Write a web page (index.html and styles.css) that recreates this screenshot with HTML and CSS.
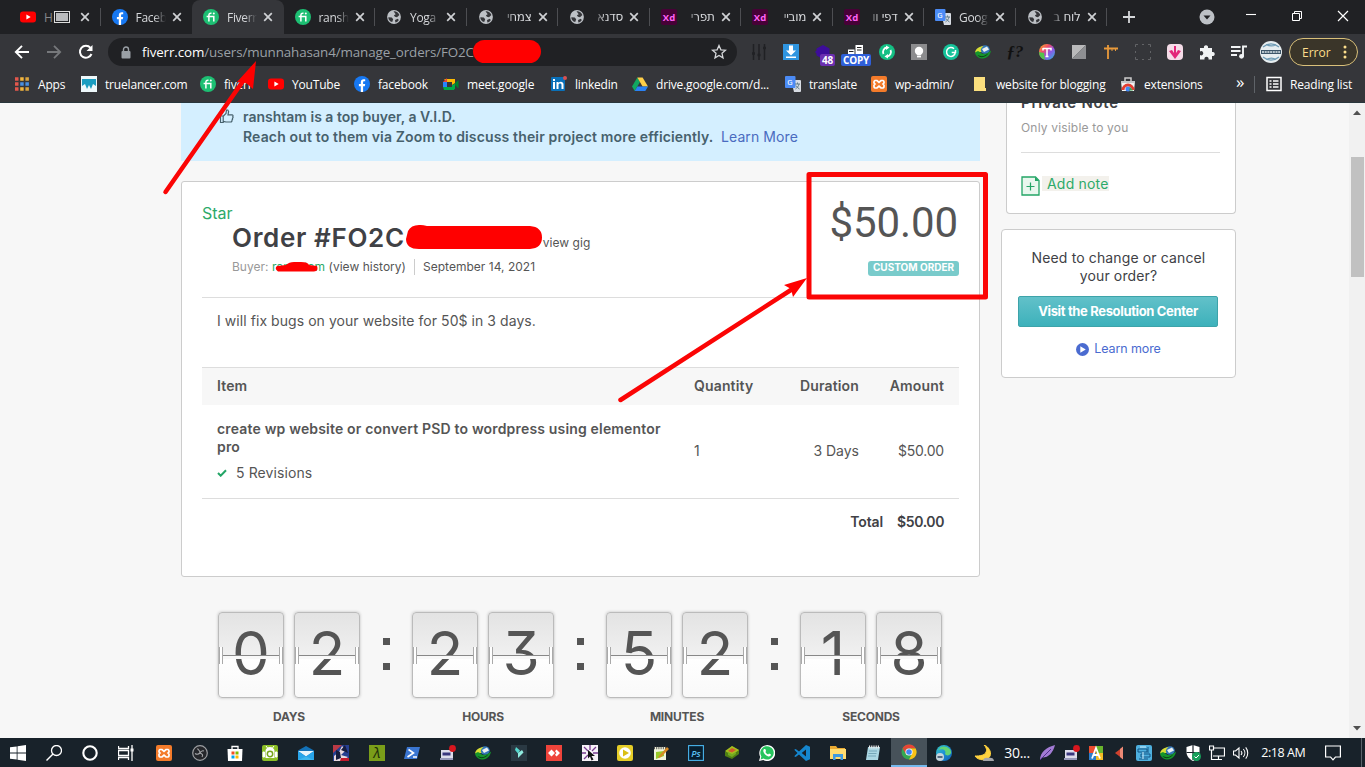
FILE: index.html
```html
<!DOCTYPE html>
<html lang="en">
<head>
<meta charset="utf-8">
<title>Fiverr order</title>
<link rel="stylesheet" href="styles.css">
</head>
<body>
<svg class="sprite" aria-hidden="true">
  <defs>
    <linearGradient id="rain" x2="1" y2="1"><stop offset="0" stop-color="#f9c21b"/><stop offset=".35" stop-color="#f04b6b"/><stop offset=".6" stop-color="#8f55e8"/><stop offset="1" stop-color="#21c3d6"/></linearGradient>
    <linearGradient id="edgeg" x2="1" y2="1"><stop offset="0" stop-color="#36c9c0"/><stop offset=".5" stop-color="#1c8fd8"/><stop offset="1" stop-color="#0f5cab"/></linearGradient>
  </defs>
  <symbol id="x" viewBox="0 0 10 10"><path d="M1.200 1.200l7.600 7.600M8.800 1.200l-7.600 7.600" stroke="currentColor" stroke-width="1.700"/></symbol>
  <symbol id="yt" viewBox="0 0 16 16"><rect y="2.500" width="16" height="11" rx="3" fill="#f00"/><path d="M6.400 5.500v5l4.300-2.500z" fill="#fff"/></symbol>
  <symbol id="fb" viewBox="0 0 16 16"><circle cx="8" cy="8" r="8" fill="#1778f2"/><path d="M6.800 16v-5.700H4.900V8h1.900V6.300c0-2 1.100-3 2.900-3 .8 0 1.500.1 1.500.1v1.900h-1c-.9 0-1.100.5-1.100 1.100V8h2.100l-.4 2.300H9.100V16z" fill="#fff"/></symbol>
  <symbol id="fi" viewBox="0 0 16 16"><circle cx="8" cy="8" r="8" fill="#1dbf73"/><path d="M3.600 7.400h7.200v5M5.900 12.400V6.200c0-1.400.8-2.100 2.600-1.900" fill="none" stroke="#fff" stroke-width="1.500"/><circle cx="10.800" cy="4.600" r="1" fill="#fff"/></symbol>
  <symbol id="globe" viewBox="0 0 16 16"><circle cx="8" cy="8" r="6.900" fill="#bdc1c6"/><path d="M7.500 2.300c2.500-.4 5 1.400 5.900 3.700L11 8.200l-2.100-.4-1-1.500 1.800-1zM2.300 8.200l3.500.3 1.400 1.800-1 2.800C3.700 12.500 2.300 10.500 2.300 8.200zM9 11l2.800-1.200 1 1.200c-.8 1.400-2 2.200-3.400 2.600z" fill="#35363a"/></symbol>
  <symbol id="xd" viewBox="0 0 16 16"><rect width="16" height="16" rx="2" fill="#470137"/><text x="8" y="11.600" text-anchor="middle" font-family="Open Sans" font-size="9.500" font-weight="700" fill="#ff61f6">Xd</text></symbol>
  <symbol id="gt" viewBox="0 0 16 16"><path d="M6 4h9a1 1 0 0 1 1 1v10a1 1 0 0 1-1 1H9z" fill="#d8dce3"/><rect width="10.500" height="12" rx="1" fill="#4b8bf5"/><text x="5" y="9" text-anchor="middle" font-family="Roboto" font-size="8" fill="#fff">G</text><path d="M10 8h5M12.500 6.500V8M14 8c-.5 2.500-2 4-3.500 5M11 9.500c.8 1.500 2 2.500 3.500 3.500" stroke="#607d8b" fill="none"/></symbol>
  <symbol id="xampp" viewBox="0 0 16 16"><rect width="16" height="16" rx="2" fill="#f47b2a"/><path d="M5.500 4.500H4a1.500 1.500 0 0 0-1 1.500v1L4 8l-1 1v1.500A1.500 1.500 0 0 0 4 12h2l2-1.800L10 12h2a1.500 1.500 0 0 0 1-1.500V9l-1-1 1-1V6a1.500 1.500 0 0 0-1-1.500h-2L8 6.300 6 4.500z" fill="none" stroke="#fff" stroke-width="1.700"/></symbol>
  <symbol id="idm" viewBox="0 0 16 16"><ellipse cx="10" cy="5.500" rx="4.800" ry="4.300" fill="#3477b8"/><path d="M0 8.500c1-4 4-6 8.500-6.500-2.500 2-3.500 4-2 6z" fill="#d8df35"/><path d="M0 9c2-2.500 4-2 6 0 3 2 6 1 10-2.500-.5 4.500-4 7.500-8 8C4 14.500 1 12.500 0 9z" fill="#15952c"/><path d="M2.500 11c4 2.200 8 1 11-2-2 4-8 6-11 2z" fill="#0a3d16"/><path d="M7 5l5-2.500 2 3-5 2.500z" fill="#e9f0f2"/></symbol>
  <symbol id="pc" viewBox="0 0 16 16"><path d="M1 5h12v9H1z" fill="#deddec"/><path d="M2.500 7.500h8v3h-8z" fill="#3a377f"/><path d="M0 13h13v2H0z" fill="#9798ba"/><circle cx="12.500" cy="3.500" r="3.400" fill="#d8161e"/></symbol>
</svg>

<header class="tabs">
  <div class="tab"><svg class="fav"><use href="#yt"/></svg><span class="tt">H<i class="tofu"></i></span><svg class="cx"><use href="#x"/></svg></div>
  <div class="tab nosep"><svg class="fav"><use href="#fb"/></svg><span class="tt">Faceb</span><svg class="cx"><use href="#x"/></svg></div>
  <div class="tab on"><svg class="fav"><use href="#fi"/></svg><span class="tt">Fiverr</span><svg class="cx"><use href="#x"/></svg></div>
  <div class="tab"><svg class="fav"><use href="#fi"/></svg><span class="tt">ransh</span><svg class="cx"><use href="#x"/></svg></div>
  <div class="tab"><svg class="fav"><use href="#globe"/></svg><span class="tt">Yoga</span><svg class="cx"><use href="#x"/></svg></div>
  <div class="tab"><svg class="fav"><use href="#globe"/></svg><span class="tt he" dir="rtl">צמחי</span><svg class="cx"><use href="#x"/></svg></div>
  <div class="tab"><svg class="fav"><use href="#globe"/></svg><span class="tt he" dir="rtl">סדנא</span><svg class="cx"><use href="#x"/></svg></div>
  <div class="tab"><svg class="fav"><use href="#xd"/></svg><span class="tt he" dir="rtl">תפרי</span><svg class="cx"><use href="#x"/></svg></div>
  <div class="tab"><svg class="fav"><use href="#xd"/></svg><span class="tt he" dir="rtl">מוביי</span><svg class="cx"><use href="#x"/></svg></div>
  <div class="tab"><svg class="fav"><use href="#xd"/></svg><span class="tt he" dir="rtl">דפי וו</span><svg class="cx"><use href="#x"/></svg></div>
  <div class="tab"><svg class="fav"><use href="#gt"/></svg><span class="tt">Goog</span><svg class="cx"><use href="#x"/></svg></div>
  <div class="tab"><svg class="fav"><use href="#globe"/></svg><span class="tt he" dir="rtl">לוח ב</span><svg class="cx"><use href="#x"/></svg></div>
  <svg class="plus" viewBox="0 0 12 12"><path d="M6 0v12M0 6h12" stroke="#d5d7da" stroke-width="1.800"/></svg>
  <div class="win">
    <svg viewBox="0 0 16 16"><circle cx="8" cy="8" r="7.500" fill="#bdc1c6"/><path d="M4.500 6.500h7L8 10.500z" fill="#202124"/></svg>
    <svg viewBox="0 0 16 16"><path d="M3 5.500h10" stroke="#fff" stroke-width="1.100"/></svg>
    <svg viewBox="0 0 16 16"><path d="M3.500 4.500h7v7h-7zM5.500 4.500v-2h7v7h-2" fill="none" stroke="#fff"/></svg>
    <svg viewBox="0 0 16 16"><path d="M3 2l10 10M13 2L3 12" stroke="#fff" stroke-width="1.200"/></svg>
  </div>
</header>

<div class="toolbar">
  <div class="nav">
    <svg viewBox="0 0 16 16"><path d="M15 8H2M8 1.800L1.800 8 8 14.200" fill="none" stroke="#fff" stroke-width="1.900"/></svg>
    <svg viewBox="0 0 16 16"><path d="M1 8h13M8 1.800L14.200 8 8 14.200" fill="none" stroke="#76787b" stroke-width="1.800"/></svg>
    <svg viewBox="0 0 16 16"><path d="M13.500 10a6 6 0 1 1-1-6.200" fill="none" stroke="#fff" stroke-width="2"/><path d="M14.500 1v6h-6z" fill="#fff"/></svg>
  </div>
  <div class="omni">
    <svg class="lock" viewBox="0 0 10 13"><path d="M2.500 5V3.500a2.500 2.500 0 0 1 5 0V5" fill="none" stroke="#9aa0a6" stroke-width="1.400"/><rect x=".5" y="5" width="9" height="7.500" rx="1" fill="#9aa0a6"/></svg>
    <span class="url"><b>fiverr.com</b>/users/munnahasan4/manage_orders/FO2C</span>
    <svg class="star" viewBox="0 0 16 16"><path d="M8 1.500l1.900 4.300 4.600.4L11 9.300l1 4.600-4-2.400-4 2.400 1-4.600L1.500 6.200l4.600-.4z" fill="none" stroke="#d5d7da" stroke-width="1.300"/></svg>
  </div>
  <div class="exts">
    <svg viewBox="0 0 16 16"><path d="M2.500 0v16M8 0v16M13.500 0v16" stroke="#202124" stroke-width="1.500"/><path d="M1 9.500h3M6.500 11h3M12 4h3" stroke="#202124" stroke-width="2.500"/></svg>
    <svg viewBox="0 0 16 16"><rect width="16" height="16" fill="#2f95e0"/><path d="M6 1.500h4v5h3L8 11.500l-5-5h3zM3 12.500h10v1.500H3z" fill="#fff"/></svg>
    <div class="eb"><svg viewBox="0 0 16 16"><path d="M8 1l6.500 3.500v7L8 15 1.500 11.500v-2L0 8l1.500-1.500v-2z" fill="#3d0d9a"/></svg><span class="bdg p">48</span></div>
    <div class="eb"><svg viewBox="0 0 16 16"><path d="M8.500 1H16v9H8.500zM1 5.500h6.500V10H1z" fill="#fff"/><path d="M10 3.500h4.500M10 6h4.500M2 7.500h4.500" stroke="#222"/></svg><span class="bdg c">COPY</span></div>
    <svg viewBox="0 0 16 16"><circle cx="8" cy="8" r="8" fill="#14bf84"/><path d="M8 3.500A4.500 4.500 0 0 0 4.500 10M8 12.500A4.500 4.500 0 0 0 11.500 6" fill="none" stroke="#fff" stroke-width="1.800"/><path d="M7 1.500l3.500 2L7 6zM9 10v4.500l-3.500-2z" fill="#fff"/></svg>
    <svg viewBox="0 0 16 16"><rect width="16" height="16" fill="#8c8c8e"/><circle cx="8" cy="7" r="4.200" fill="#fff"/><path d="M6 12.500h4" stroke="#fff" stroke-width="1.800"/></svg>
    <svg viewBox="0 0 16 16"><circle cx="8" cy="8" r="8" fill="#15c39a"/><path d="M11 4.800A4.400 4.400 0 1 0 12.300 8.600H8.700M12.500 6v3" fill="none" stroke="#fff" stroke-width="1.500"/></svg>
    <svg><use href="#idm"/></svg>
    <svg viewBox="0 0 16 16"><text x="8" y="13" text-anchor="middle" font-family="Liberation Serif" font-style="italic" font-size="17" font-weight="700" fill="#111">ƒ?</text></svg>
    <svg viewBox="0 0 16 16"><circle cx="8" cy="8" r="8" fill="url(#rain)"/><path d="M0 8a8 8 0 0 0 6 7.700L5 9z" fill="#54c34b"/><path d="M4 4.500h8v2M8 4.500v8M6.500 12.500h3M4 4v2.500" stroke="#fff" stroke-width="1.500" fill="none"/></svg>
    <svg viewBox="0 0 16 16"><path d="M1 1h14L1 15z" fill="#b9b9ba"/><path d="M15 1v14H1z" fill="#8e8f92"/></svg>
    <svg viewBox="0 0 16 16"><path d="M1 4.500h14M5 1v14" stroke="#e99a3b" stroke-width="1.800"/><path d="M9 4v3M12.500 4v3" stroke="#e99a3b"/></svg>
    <svg viewBox="0 0 16 16"><path d="M.5 3V.5H3M13 .5h2.500V3M15.500 13v2.500H13M3 15.500H.5V13M7 .5h2M7 15.500h2M.5 7v2M15.500 7v2" stroke="#626366" fill="none"/></svg>
    <svg viewBox="0 0 16 16"><rect width="16" height="16" rx="4" fill="#f5dce8"/><path d="M2 7l3-1 2 3V2h2v7l2-3 3 1-6 8z" fill="#e32679"/></svg>
    <svg viewBox="0 0 16 16"><path d="M1 4h4a2.100 2.100 0 1 1 4 0h4v4a2.100 2.100 0 1 1 0 4v3.500H9.500a2.100 2.100 0 1 0-4 0H1V11a2.100 2.100 0 1 0 0-3.500z" fill="#f1f3f4"/></svg>
    <svg viewBox="0 0 16 16"><path d="M0 3h9.500M0 7h9.500M0 11h6M12 12.500V2.500h4" stroke="#f1f3f4" stroke-width="1.900" fill="none"/><circle cx="10.500" cy="12.300" r="2.400" fill="#f1f3f4"/></svg>
    <svg class="av" viewBox="0 0 22 22"><circle cx="11" cy="11" r="11" fill="#e7eef1"/><path d="M3 6c5-4 11-4 16 0M3 16c5 4 11 4 16 0M6 3.500c4 2 7 2 10 0M6 18.500c4-2 7-2 10 0" stroke="#6d9bb5" fill="none" stroke-width="1.300"/><path d="M1 9h20v4H1z" fill="#3c5569"/><path d="M2 11h18" stroke="#dce7ec" stroke-width="1.500" stroke-dasharray="2 .7"/></svg>
  </div>
  <div class="err">Error<svg viewBox="0 0 4 14"><circle cx="2" cy="2" r="1.500"/><circle cx="2" cy="7" r="1.500"/><circle cx="2" cy="12" r="1.500"/></svg></div>
</div>

<nav class="marks">
  <a><svg viewBox="0 0 16 16"><path d="M1 3h3.500M1 8h3.500M1 13h3.500" stroke="#e2574c" stroke-width="3.300"/><path d="M6.200 3h3.500M6.200 13h3.500" stroke="#f3b63c" stroke-width="3.300"/><path d="M6.200 8h3.500M11.400 8h3.500" stroke="#4a90e2" stroke-width="3.300"/><path d="M11.400 3h3.500M11.400 13h3.500" stroke="#d9a441" stroke-width="3.300"/></svg>Apps</a>
  <a><svg viewBox="0 0 16 16"><rect width="16" height="16" fill="#eef8fa"/><path d="M1 3h14v7l-3-2-2 5-2-4-2 4-2-5-3 2z" fill="#1a9dc0"/></svg>truelancer.com</a>
  <a><svg><use href="#fi"/></svg>fiverr</a>
  <a><svg><use href="#yt"/></svg>YouTube</a>
  <a><svg><use href="#fb"/></svg>facebook</a>
  <a><svg viewBox="0 0 16 16"><path d="M1 3h10v3H4z" fill="#fbbc04"/><path d="M0 6l4-4v4z" fill="#ea4335"/><path d="M0 6h4v5H0z" fill="#2684fc"/><path d="M0 11h11v3H1z" fill="#00ac47"/><path d="M11 8l4.500-4v8.500z" fill="#00832d"/><path d="M9 3h3v4L9 9z" fill="#ffba00"/><path d="M9 9l3-1v5l-3 1z" fill="#00ac47"/></svg>meet.google</a>
  <a><svg viewBox="0 0 16 16"><rect y="1" width="14" height="14" rx="1" fill="#0a70b8"/><path d="M2 6h2v7H2zM2 3h2v2H2zM5.500 6h2v1c1.500-2 5-1.500 5 1.500V13h-2V9c0-2-3-1.800-3 0v4h-2z" fill="#fff"/><circle cx="14" cy="2" r="2" fill="#d85050"/></svg>linkedin</a>
  <a><svg viewBox="0 0 16 16"><path d="M5.300 1.500L0 10.500 2.700 15 8 6z" fill="#11a861"/><path d="M5.300 1.500h5.300L16 10.500h-5.400z" fill="#ffcf48"/><path d="M5.400 10.500H16L13.300 15H2.700z" fill="#2a82f5"/></svg>drive.google.com/d...</a>
  <a><svg><use href="#gt"/></svg>translate</a>
  <a><svg><use href="#xampp"/></svg>wp-admin/</a>
  <a><svg viewBox="0 0 16 16"><path d="M2 1h11v11h1v3H2z" fill="#fbdf7e"/></svg>website for blogging</a>
  <a><svg viewBox="0 0 16 16"><path d="M1 5h14l-1 10H2z" fill="#f2f2f2"/><path d="M1 5h14v2H1z" fill="#c4c6c9"/><path d="M5 5V2h6v3" stroke="#ccc" fill="none" stroke-width="1.500"/><path d="M3 14a5 5 0 0 1 10 0" stroke="#e33d32" stroke-width="3" fill="none"/><circle cx="8" cy="13" r="2.500" fill="#4285f4"/><path d="M10 11l3 3.500H9z" fill="#34a853"/></svg>extensions</a>
  <span class="more">»</span>
  <a class="rl"><svg viewBox="0 0 16 16"><rect x="1" y="1.500" width="14" height="13" fill="none" stroke="#fff" stroke-width="1.500"/><path d="M3.500 5h2M3.500 8h2M3.500 11h2M7 5h5.500M7 8h5.500M7 11h5.500" stroke="#fff" stroke-width="1.500"/></svg>Reading list</a>
</nav>

<main class="page">
  <section class="left">
    <div class="vid">
      <svg viewBox="0 0 15 15"><path d="M1.500 7h2.700v6.500H1.500zM4.200 7.200L7 4.500 7.500 1h1.300l.8 1.500L9 5.800h4c1 0 1.300 1 .8 1.600.5.700.3 1.500-.3 1.900.3.800 0 1.400-.5 1.700.2 1-.3 1.900-1.300 2H7l-2.800-.7" fill="none" stroke="#47616d" stroke-width="1.200"/></svg>
      <p>ranshtam is a top buyer, a V.I.D.<br><span>Reach out to them via Zoom to discuss their project more efficiently.</span> <a>Learn More</a></p>
    </div>
    <article class="order">
      <div class="ohead">
        <div>
          <div class="star-t">Star</div>
          <h1>Order #FO2C<small>view gig</small></h1>
          <div class="buyer"><span class="g">Buyer: <em>ranshtam</em> </span><span class="hist">(view history)</span><span class="date">September 14, 2021</span></div>
        </div>
        <div class="price"><strong>$50.00</strong><span>CUSTOM ORDER</span></div>
      </div>
      <p class="desc">I will fix bugs on your website for 50$ in 3 days.</p>
      <div class="row th"><span>Item</span><span>Quantity</span><span class="r">Duration</span><span class="r">Amount</span></div>
      <div class="row tb">
        <div><b>create wp website or convert PSD to wordpress using elementor pro</b><div class="rev"><svg viewBox="0 0 10 8"><path d="M1 4l2.700 2.700L9 1.200" fill="none" stroke="#23a566" stroke-width="2"/></svg>5 Revisions</div></div>
        <span>1</span><span class="r">3 Days</span><span class="r amt">$50.00</span>
      </div>
      <div class="total"><span>Total</span><span>$50.00</span></div>
    </article>
    <div class="clock">
      <div class="unit"><div class="pair"><div class="flip">0</div><div class="flip">2</div></div><label>DAYS</label></div>
      <div class="colon"><i></i><i></i></div>
      <div class="unit"><div class="pair"><div class="flip">2</div><div class="flip">3</div></div><label>HOURS</label></div>
      <div class="colon"><i></i><i></i></div>
      <div class="unit"><div class="pair"><div class="flip">5</div><div class="flip">2</div></div><label>MINUTES</label></div>
      <div class="colon"><i></i><i></i></div>
      <div class="unit"><div class="pair"><div class="flip">1</div><div class="flip">8</div></div><label>SECONDS</label></div>
    </div>
  </section>
  <aside class="side">
    <div class="note">
      <h3>Private Note</h3>
      <p>Only visible to you</p>
      <div class="add"><svg viewBox="0 0 19 20"><path d="M1 1h13.500L18 4.500V19H1z" fill="#e9f7ee" stroke="#23a566" stroke-width="1.300"/><path d="M14 1v4h4z" fill="#23a566"/><path d="M9.500 6.500v8M5.500 10.500h8" stroke="#23a566" stroke-width="1.200"/></svg><span>Add note</span></div>
    </div>
    <div class="help">
      <p>Need to change or cancel<br>your order?</p>
      <div class="btn">Visit the Resolution Center</div>
      <div class="lm"><svg viewBox="0 0 12 12"><circle cx="6" cy="6" r="6" fill="#4a6bd0"/><path d="M4 3v6l5-3z" fill="#fff"/></svg>Learn more</div>
    </div>
  </aside>
  <div class="scroll"><svg viewBox="0 0 8 5"><path d="M0 5l4-4.500L8 5z"/></svg><div class="thumb"></div><svg class="dn" viewBox="0 0 8 5"><path d="M0 0l4 4.500L8 0z"/></svg></div>
</main>

<footer class="task">
  <div class="sys">
    <svg viewBox="0 0 16 16"><path d="M0 2.300L6.700 1.400v6.200H0zM7.500 1.300L16 0v7.600H7.500zM0 8.400h6.700v6.200L0 13.700zM7.500 8.400H16V16l-8.500-1.300z" fill="#fff"/></svg>
    <svg viewBox="0 0 16 16"><circle cx="10.500" cy="5.500" r="5" fill="none" stroke="#fff" stroke-width="1.300"/><path d="M7 9L.5 15.500" stroke="#fff" stroke-width="1.400"/></svg>
    <svg viewBox="0 0 16 16"><circle cx="8" cy="8" r="6.700" fill="none" stroke="#fff" stroke-width="2.100"/></svg>
    <svg viewBox="0 0 16 16"><path d="M.5 1v2.500h10V1M.5 15v-2.500h10V15M.5 5.500h10v5H.500zM14 0v16" fill="none" stroke="#fff" stroke-width="1.300"/><path d="M12.500 5h3" stroke="#fff" stroke-width="3"/></svg>
  </div>
  <div class="apps">
    <i><svg><use href="#xampp"/></svg></i>
    <i><svg viewBox="0 0 16 16"><circle cx="8" cy="8" r="7.300" fill="#25272b" stroke="#9d9fa2" stroke-width="1.200"/><path d="M8 7.500C8 5 6 5 5.500 3.500M8 8c3 1 3 2.500 2 4M8 8c-2 2-3.500 1.500-5 .5M8 8c1-2 2.500-2.500 4-2" stroke="#a5a7aa" stroke-width="1.100" fill="none"/></svg></i>
    <i><svg viewBox="0 0 16 16"><path d="M5 4V1.500h6V4" fill="none" stroke="#fff" stroke-width="1.300"/><path d="M.500 4h15L15 16H1z" fill="#fff"/><path d="M4.500 6.500h3v3h-3z" fill="#f25022"/><path d="M8.500 6.500h3v3h-3z" fill="#7fba00"/><path d="M4.500 10.500h3v3h-3z" fill="#00a4ef"/><path d="M8.500 10.500h3v3h-3z" fill="#ffb900"/></svg></i>
    <i><svg viewBox="0 0 16 16"><rect width="16" height="16" rx="2" fill="#8dbf27"/><path d="M3.500 6a4.500 4 0 0 1 9 0v7h-9z" fill="#fff"/><path d="M1 7h1.500v5H1zM13.500 7H15v5h-1.500zM4 1l1.500 2M12 1l-1.500 2" stroke="#fff" fill="#fff"/><circle cx="8" cy="9" r="2.700" fill="none" stroke="#78a51d" stroke-width="1.500"/></svg></i>
    <i><svg viewBox="0 0 16 16"><path d="M0 5.500L8 1l8 4.500V15H0z" fill="#1372b8"/><path d="M0 6h16l-8 5.500z" fill="#e8f4fb"/><path d="M0 6l8 5.500L16 6v9H0z" fill="#28a5ea"/><path d="M0 15l8-3.500 8 3.500z" fill="#3db6ee"/></svg></i>
    <i><svg viewBox="0 0 16 16"><rect width="16" height="16" fill="#263f91"/><path d="M0 0h9L0 8z" fill="#bb3a45"/><path d="M1 11l5-4 3-6 4 4-5 5 7 2-6 4H1z" fill="#e9d9df"/><path d="M3 5l4 2 1 6-5 2zM12 0l3 8-7-3z" fill="#171d3e"/><path d="M8 13h8v3H7z" fill="#c31a2d"/></svg></i>
    <i><svg viewBox="0 0 16 16"><rect width="16" height="16" fill="#7a9e19"/><text x="8" y="12.500" text-anchor="middle" font-family="Noto Sans" font-size="14" fill="#20300b">λ</text></svg></i>
    <i><svg viewBox="0 0 16 16"><path d="M3 2h13l-3 12H0z" fill="#3a76d2"/><path d="M4.500 4.500l5 3.500-6 4M9 12h4" fill="none" stroke="#fff" stroke-width="1.600"/></svg></i>
    <i><svg><use href="#pc"/></svg></i>
    <i><svg><use href="#idm"/></svg></i>
    <i><svg viewBox="0 0 16 16"><rect width="16" height="16" fill="#2a3943"/><path d="M5 2l4 3.500-2 3L4 5z" fill="#56d7cd"/><path d="M7 8l4-3 1.500 2.500L7 13V11z" fill="#90ece0"/></svg></i>
    <i><svg viewBox="0 0 16 16"><rect width="16" height="16" fill="#ef443b"/><path d="M5.500 4.500L2 8l3.500 3.500L9 8zM10.500 4.500L9 6.200 10.500 8 9 9.800l1.500 1.700L14 8z" fill="#fff"/></svg></i>
    <i><svg viewBox="0 0 16 16"><rect width="16" height="16" fill="#f7f3f8"/><path d="M8 0v5M2 2l4 4M14 2l-4 4M0 8h4M2 14l4-4M11 8h5" stroke="#783c8f" stroke-width="1.300"/><path d="M6 5l7 6H9.500l2 3.500-2 1-1.500-4L6 13.500z" fill="#111"/></svg></i>
    <i><svg viewBox="0 0 16 16"><rect width="16" height="16" rx="2" fill="#e5ce28"/><circle cx="8" cy="8" r="5.800" fill="#fff"/><path d="M6 4.500v7L12 8z" fill="#dabf14"/></svg></i>
    <i><svg viewBox="0 0 16 16"><path d="M1 2h12v13H1z" fill="#f0f4dc"/><path d="M1 3h12" stroke="#555" stroke-width="2.500" stroke-dasharray="1 1.200"/><path d="M3 7l8-1v5l-8 3z" fill="#97ca28"/><path d="M6 11l8-9 2 2-8 8-3 1z" fill="#d68a24"/></svg></i>
    <i><svg viewBox="0 0 16 16"><rect x=".600" y=".6" width="14.800" height="14.800" fill="#071e2e" stroke="#49b4ec" stroke-width="1.100"/><text x="8" y="11.500" text-anchor="middle" font-family="Open Sans" font-size="9" font-weight="600" fill="#5bc2f3">Ps</text></svg></i>
    <i><svg viewBox="0 0 16 16"><path d="M1 7l7-6 7 4v4l-7 5-7-3z" fill="#4f7f13"/><path d="M1 6l7-5 7 4-7 5z" fill="#a4be1e"/><path d="M4 6l4-3 4 2-4 2.500z" fill="#cf582b"/><path d="M4 7l4 2 4-2v2l-4 3-4-2z" fill="#72ab21"/></svg></i>
    <i><svg viewBox="0 0 16 16"><path d="M0 16l1.200-4.200A8 8 0 1 1 4.300 15z" fill="#fff"/><path d="M1.600 14.400l.8-2.900A6.700 6.700 0 1 1 4.600 13.600z" fill="#25c55d"/><path d="M5 4h1.300l.8 2-.7 1c.6 1.300 1.500 2 2.700 2.500l.9-1 2 1c0 1.500-1.500 2.200-2.700 1.900C6.400 10.600 4.700 8.500 4.300 6.300 4.200 5.300 4.600 4.500 5 4z" fill="#fff"/></svg></i>
    <i><svg viewBox="0 0 16 16"><path d="M12 0l4 1.700v12.600L12 16 5 9.600 1.700 12 .2 11.300 3.500 8 .2 4.700 1.700 4 5 6.400zM12 4.500L7.700 8l4.300 3.500z" fill="#1587cf" fill-rule="evenodd"/></svg></i>
    <i><svg viewBox="0 0 16 16"><path d="M0 1h6l1.500 2H15v11H0z" fill="#e9aa32"/><path d="M0 4h16v10H0z" fill="#ffdc70"/><path d="M3 9h10v6h-2.500v-3h-5v3H3z" fill="#3e9ae0"/></svg></i>
    <i><svg viewBox="0 0 16 16"><path d="M3 2h12l-2 13H1z" fill="#abd7e3"/><path d="M4 2h11" stroke="#eee" stroke-width="3" stroke-dasharray="1.200 1"/><path d="M4 6h8M3.500 8.500h8M3 11h8" stroke="#679bad" stroke-width=".8"/></svg></i>
    <i class="act"><svg viewBox="0 0 16 16"><circle cx="8" cy="8" r="7.500" fill="#34a853"/><path d="M1.500 4.300A7.500 7.500 0 0 1 14.700 4.500H8z" fill="#ea4335"/><path d="M1.500 4.300L5 10l3-5.500z" fill="#ea4335"/><path d="M14.700 4.500A7.500 7.500 0 0 1 8 15.500L11 10 9 4.500z" fill="#fbc116"/><circle cx="8" cy="8" r="3.600" fill="#fff"/><circle cx="8" cy="8" r="2.800" fill="#4285f4"/></svg></i>
    <i><svg viewBox="0 0 16 16"><circle cx="8" cy="8" r="8" fill="url(#edgeg)"/><path d="M5 2c5-2 11 2 10 6-1 3-5 3-6 1 2-4-3-6-7-4z" fill="#62d374"/><circle cx="4" cy="12" r="4" fill="#c4d5df"/><path d="M1.500 12h5" stroke="#536b82" stroke-width="2"/></svg></i>
  </div>
  <div class="tray">
    <svg class="w20" viewBox="0 0 20 16"><path d="M10 0c4 4 3 8-1 10-3 1-6 1-8 1 3 5 13 5 15 0C18 7 14 1 10 0z" fill="#ffd23e" stroke="#ffd23e"/><path d="M9 16c0-3 3-4 5-3 3-1 6 0 6 3z" fill="#a4a6aa"/></svg>
    <span class="temp">30...</span>
    <svg viewBox="0 0 16 16"><path d="M1 15C1 7 8 2 16 0 14 8 9 13 3 12.500z" fill="#a27bd4"/><path d="M1 15L12 4" stroke="#51308c"/></svg>
    <svg><use href="#pc"/></svg>
    <svg viewBox="0 0 16 16"><path d="M1 1h7v7H1z" fill="#eb4c2f"/><path d="M8 1h7v7H8z" fill="#68b52d"/><path d="M1 8h7v7H1z" fill="#2c7fcc"/><path d="M8 8h7v7H8z" fill="#f3bc24"/><path d="M4 13.500L8 3l4 10.500M5.500 10h5" stroke="#fff" stroke-width="1.800" fill="none"/></svg>
    <svg viewBox="0 0 16 16"><path d="M3 8l8-6v12z" fill="#cf422e"/><path d="M8 4l3-2.500v13L8 12z" fill="#ec8a76"/></svg>
    <svg viewBox="0 0 16 16"><rect width="16" height="16" rx="2" fill="#4eb0df"/><path d="M2 4h9v3H2zM5 9h9v3H5zM3 14h9M12 2v6" stroke="#125485" fill="none"/><path d="M4 2h6M7 7v7" stroke="#d2f1ff"/></svg>
    <svg><use href="#idm"/></svg>
    <svg viewBox="0 0 16 16"><path d="M8 0l6.500 2v5c0 4-2.500 7-6.500 9-4-2-6.500-5-6.500-9V2z" fill="#fff"/><path d="M8 0v15M1.500 7.500h13" stroke="#1a222a" stroke-width="1.200"/><circle cx="11.500" cy="11.500" r="4.500" fill="#16a05b"/><path d="M9.500 11.500l1.500 1.500 3-3" stroke="#fff" fill="none"/></svg>
    <svg viewBox="0 0 16 16"><path d="M4 3h11.500v8H4M9.500 11v3M6 14.500h7M.5 1h4v4h-4zM2.500 5v9.500H6" fill="none" stroke="#fff" stroke-width="1.200"/></svg>
    <svg viewBox="0 0 16 16"><path d="M.500 6h2L6 3v10L2.500 10h-2zM8 6a3 3 0 0 1 0 4M10.300 4a6 6 0 0 1 0 8M12.700 2.300a9 9 0 0 1 0 11.400" fill="none" stroke="#fff" stroke-width="1.100"/></svg>
    <span class="time">2:18 AM</span>
    <svg class="act-c" viewBox="0 0 16 16"><path d="M.6 1h14.800v11h-5L8 14.800 5.600 12h-5z" fill="none" stroke="#fff" stroke-width="1.200"/></svg>
    <i class="peek"></i>
  </div>
</footer>

<svg class="ink" viewBox="0 0 1365 767">
  <g fill="none" stroke="#fb0505" stroke-linecap="round">
    <path d="M165.500 192L248 74" stroke-width="4.500"/>
    <path d="M620.500 400L794 288" stroke-width="4.500"/>
    <rect x="809" y="174.500" width="176.500" height="122.500" stroke-width="5" stroke-linejoin="round"/>
  </g>
  <g fill="#f00">
    <path d="M256 61l-19 21 9 1 7 6z"/>
    <path d="M807 278l-23 7 7 4 2 8z"/>
    <rect x="473" y="40" width="68" height="23" rx="11.500"/>
    <path d="M408 231q3-6 11-6 3-.5 8 1h103q12 1 12 11.500T530 249H419q-13 0-13-10z"/>
    <path d="M277 266l9-1q3-3 8-3h7q7 0 8 3l8 1q2 5-3 5.500h-36q-4-3-1-5.500z"/>
  </g>
</svg>
</body>
</html>
```
FILE: styles.css
```css
* { box-sizing: border-box; }
body { margin: 0; width: 1365px; height: 767px; overflow: hidden; position: relative; background: #f7f7f7; font-family: "Open Sans", "Noto Sans", sans-serif; font-size: 12px; color: #fff; }
p, h1, h3 { margin: 0; }
svg { display: block; flex: none; }
.sprite { position: absolute; width: 0; height: 0; }

.tabs { display: flex; height: 34px; background: #202124; padding-left: 9px; align-items: center; }
.tab { width: 91.5px; height: 34px; flex: none; display: flex; align-items: center; padding-left: 11px; background: linear-gradient(#4d4e52, #4d4e52) right 8px / 1px 18px no-repeat; }
.tab.nosep { background: none; }
.tab.on { background: #35363a; border-radius: 8px 8px 0 0; }
.fav { width: 16px; height: 16px; }
.tt { width: 30px; margin-left: 8px; overflow: hidden; white-space: nowrap; color: #d5d7da; letter-spacing: -.3px; -webkit-mask-image: linear-gradient(90deg, #000 60%, transparent); mask-image: linear-gradient(90deg, #000 60%, transparent); }
.tt.he { font-family: "DejaVu Sans", sans-serif; -webkit-mask-image: linear-gradient(-90deg, #000 60%, transparent); mask-image: linear-gradient(-90deg, #000 60%, transparent); }
.tab:first-child .tt { -webkit-mask-image: none; mask-image: none; display: flex; align-items: center; color: #85878b; }
.tofu { width: 16px; height: 12px; margin-left: 1px; border: 1px solid #ddd; outline: 1px solid #202124; outline-offset: -2px; background: #b9babc; }
.cx { width: 10px; height: 10px; margin-left: 6px; color: #cfd1d4; }
.plus { width: 12px; height: 12px; margin-left: 16px; }
.win { display: flex; margin-left: auto; gap: 30px; padding-right: 14px; }
.win svg { width: 16px; height: 16px; }
.win svg:first-child { margin-right: -2px; }

.toolbar { height: 36px; background: #35363a; display: flex; align-items: center; }
.nav { display: flex; width: 108px; padding-left: 14px; gap: 16px; }
.nav svg { width: 16px; height: 16px; }
.omni { width: 629px; height: 28px; border-radius: 14px; background: #202124; display: flex; align-items: center; padding: 0 10px 0 13px; }
.lock { width: 10px; height: 13px; }
.url { font-size: 13.400px; color: #9aa0a6; margin-left: 11px; flex: 1; letter-spacing: -.12px; white-space: nowrap; }
.url b { font-weight: 400; color: #fff; }
.star { width: 16px; height: 16px; }
.exts { display: flex; gap: 16px; padding-left: 14px; align-items: center; }
.exts svg { width: 16px; height: 16px; overflow: visible; }
.exts .av { width: 22px; height: 22px; margin-left: -3px; }
.eb { position: relative; }
.bdg { position: absolute; top: 10px; font: 700 10px/12px "Open Sans", sans-serif; border-radius: 2px; padding: 0 2px; letter-spacing: -.2px; }
.bdg.p { left: 5px; background: #6b2fb0; }
.bdg.c { left: -6px; background: #2f5fd8; }
.err { margin-left: 7px; width: 69px; height: 28px; border: 1px solid #d9c07a; border-radius: 14px; background: #3a3529; color: #fddf8c; display: flex; align-items: center; padding-left: 12px; }
.err svg { width: 4px; height: 14px; margin-left: 12px; fill: #fddf8c; }

.marks { height: 33px; background: #35363a; border-bottom: 1px solid #29363c; display: grid; grid-template-columns: 67px 119px 68px 86px 89px 108px 81px 153px 86px 101px 148px 120px 27px 1fr; padding: 0 0 4px 14px; align-items: center; }
.marks a { display: flex; align-items: center; gap: 8px; white-space: nowrap; letter-spacing: -.18px; }
.marks svg { width: 16px; height: 16px; }
.more { font-size: 17px; line-height: 16px; height: 20px; margin-left: -4px; }
.rl { border-left: 1px solid #5f6368; padding-left: 11px; margin-left: -13px; }

.page { height: 635px; display: flex; background: #f7f7f7; color: #555; font-family: Inter, "Liberation Sans", sans-serif; font-size: 14px; overflow: hidden; }
.left { width: 799px; margin-left: 181px; flex: none; }
.vid { height: 58px; background: #d4efff; display: flex; padding: 4px 0 0 38px; font-weight: 600; line-height: 20px; color: #47616d; }
.vid svg { width: 15px; height: 15px; margin-top: 2px; }
.vid p { margin-left: 9px; white-space: nowrap; }
.vid span { letter-spacing: .15px; }
.vid a { color: #4a6bc0; font-weight: 400; margin-left: 4px; letter-spacing: .1px; }
.order { height: 396px; margin-top: 20px; background: #fff; border: 1px solid #ccc; border-radius: 3px; padding: 0 20px; }
.ohead { height: 116px; padding-top: 21px; border-bottom: 1px solid #ddd; display: flex; justify-content: space-between; }
.star-t { font-size: 16px; line-height: 20px; color: #2daa69; }
h1 { height: 30px; font-size: 26px; line-height: 30px; color: #404145; font-weight: 600; margin-left: 30px; letter-spacing: .65px; white-space: nowrap; display: flex; }
h1 small { font-size: 12px; font-weight: 400; margin-left: 138px; padding-top: 5px; color: #555; letter-spacing: .05px; }
.buyer { margin-left: 30px; display: flex; line-height: 28px; font-size: 12px; align-items: center; white-space: pre; letter-spacing: .02px; }
.g { color: #999; }
.g em { font-style: normal; color: #2daa69; }
.date { line-height: 16px; border-left: 1px solid #ccc; padding-left: 8px; margin-left: 8px; }
.price { text-align: right; }
.price strong { display: block; font: 400 42px/40px Roboto, sans-serif; letter-spacing: -.1px; margin-right: 1px; }
.price span { display: block; margin: 18px 0 0 auto; width: 91px; height: 15px; font-size: 10px; line-height: 13px; font-weight: 700; text-align: center; color: #fff; background: #79cbcb; border-radius: 3px; white-space: nowrap; }
.desc { height: 69px; padding: 13px 15px; line-height: 20px; letter-spacing: .06px; }
.row { display: grid; grid-template-columns: 477px 80px 85px 85px; padding: 0 15px; }
.th { height: 38px; border-top: 1px solid #ddd; background: #f7f7f7; font-weight: 600; line-height: 36px; letter-spacing: .15px; }
.tb { height: 94px; border-bottom: 1px solid #ddd; line-height: 92px; }
.tb > div { padding-top: 15px; line-height: 18px; }
.tb b { font-weight: 600; display: block; width: 460px; letter-spacing: .17px; }
.rev { display: flex; align-items: center; margin-top: 8px; letter-spacing: .1px; }
.rev svg { width: 10px; height: 8px; margin-right: 9px; }
.r { text-align: right; }
.amt { letter-spacing: -.2px; }
.total { display: flex; justify-content: flex-end; gap: 14px; padding: 13px 15px; line-height: 20px; font-weight: 600; letter-spacing: -.4px; color: #404145; }
.total span:first-child { letter-spacing: -.1px; }
.clock { display: flex; margin: 35px 0 0 37px; }
.pair { display: flex; gap: 10px; }
.flip { position: relative; width: 66px; height: 86px; border-radius: 4px; border: 1px solid #bbb; box-shadow: 0 0 3px #bbb; background: linear-gradient(#e3e3e3, #f0f0f0 50%, #fff 50%, #f9f9f9); font: 400 60px/81px Inter, sans-serif; font-feature-settings: "cv09"; text-align: center; color: #555; }
.flip::before { content: ""; position: absolute; left: 3px; right: 3px; top: 42px; height: 3px; border-top: 1px solid #888; background: #f8f8f8; }
.flip::after { content: ""; position: absolute; left: 0; right: 0; top: 34px; height: 17px; background: linear-gradient(90deg, #aaa 1px, #fff 1px 3px, #aaa 3px 4px, transparent 4px calc(100% - 4px), #aaa calc(100% - 4px) calc(100% - 3px), #fff calc(100% - 3px) calc(100% - 1px), #aaa calc(100% - 1px)); }
.clock label { display: block; text-align: center; font-size: 12px; line-height: 16px; font-weight: 700; letter-spacing: -.2px; margin-top: 11px; }
.colon { width: 52px; display: flex; flex-direction: column; align-items: center; padding-top: 26px; gap: 18px; }
.colon i { width: 7px; height: 7px; background: #555; }

.side { margin-left: 21px; width: 235px; }
.note { height: 111px; margin-left: 5px; background: #fff; border: 1px solid #ccc; border-top: 0; border-radius: 0 0 4px 4px; padding-left: 14px; display: flow-root; }
.note h3 { font-size: 15px; line-height: 16px; height: 14px; margin-top: -8px; font-weight: 600; color: #404145; letter-spacing: .7px; }
.note p { font-size: 12px; line-height: 16px; color: #999; margin-top: 11px; width: 199px; height: 33px; border-bottom: 1px solid #ddd; letter-spacing: .18px; }
.add { display: flex; margin-top: 23px; color: #2daa69; line-height: 16px; letter-spacing: .2px; }
.add svg { width: 19px; height: 20px; }
.add span { margin-left: 2px; padding-left: 5px; height: 15px; background: #f3f1ec; }
.help { height: 149px; margin-top: 15px; background: #fff; border: 1px solid #ccc; border-radius: 4px; padding: 19px 16px; text-align: center; line-height: 18px; color: #404145; }
.help p { letter-spacing: .13px; }
.btn { margin-top: 11px; width: 200px; height: 31px; border: 1px solid #3da3a9; border-radius: 2px; background: linear-gradient(#62c1c9, #3db1bb); color: #fff; font-weight: 700; font-size: 13px; line-height: 29px; letter-spacing: -.35px; }
.lm { display: flex; align-items: center; justify-content: center; gap: 5px; margin-top: 13px; font-size: 12.500px; color: #4a6bd0; letter-spacing: -.1px; }
.lm svg { width: 13px; height: 13px; }
.scroll { margin-left: auto; width: 16px; background: #f1f1f1; display: flex; flex-direction: column; padding: 7px 0 7px 2px; }
.scroll svg { width: 8px; height: 5px; margin-left: 2px; fill: #505050; }
.scroll .dn { margin-top: auto; }
.thumb { width: 13px; height: 120px; margin-top: 42px; background: #c1c1c1; }

.task { height: 29px; background: #18222a; display: flex; align-items: center; }
.task svg { width: 16px; height: 16px; }
.sys { display: flex; gap: 20px; padding-left: 10px; width: 146.300px; flex: none; }
.apps { display: flex; flex: none; }
.apps i { width: 35.480px; height: 29px; display: flex; align-items: center; justify-content: center; }
.apps .act { background: #47525a; border-bottom: 2px solid #76b9ed; }
.tray { display: flex; align-items: center; gap: 8.200px; margin-left: 12px; flex: 1; }
.tray .w20 { width: 20px; }
.temp { font-size: 14px; width: 27px; letter-spacing: -.3px; margin-left: 2px; }
.time { font-size: 12.500px; width: 46px; white-space: nowrap; letter-spacing: -.4px; margin-left: 4px; }
.tray .act-c { margin-left: 10px; }
.peek { width: 1px; height: 29px; background: #59636a; margin-left: 11px; }
.ink { position: absolute; left: 0; top: 0; width: 1365px; height: 767px; pointer-events: none; }
```
